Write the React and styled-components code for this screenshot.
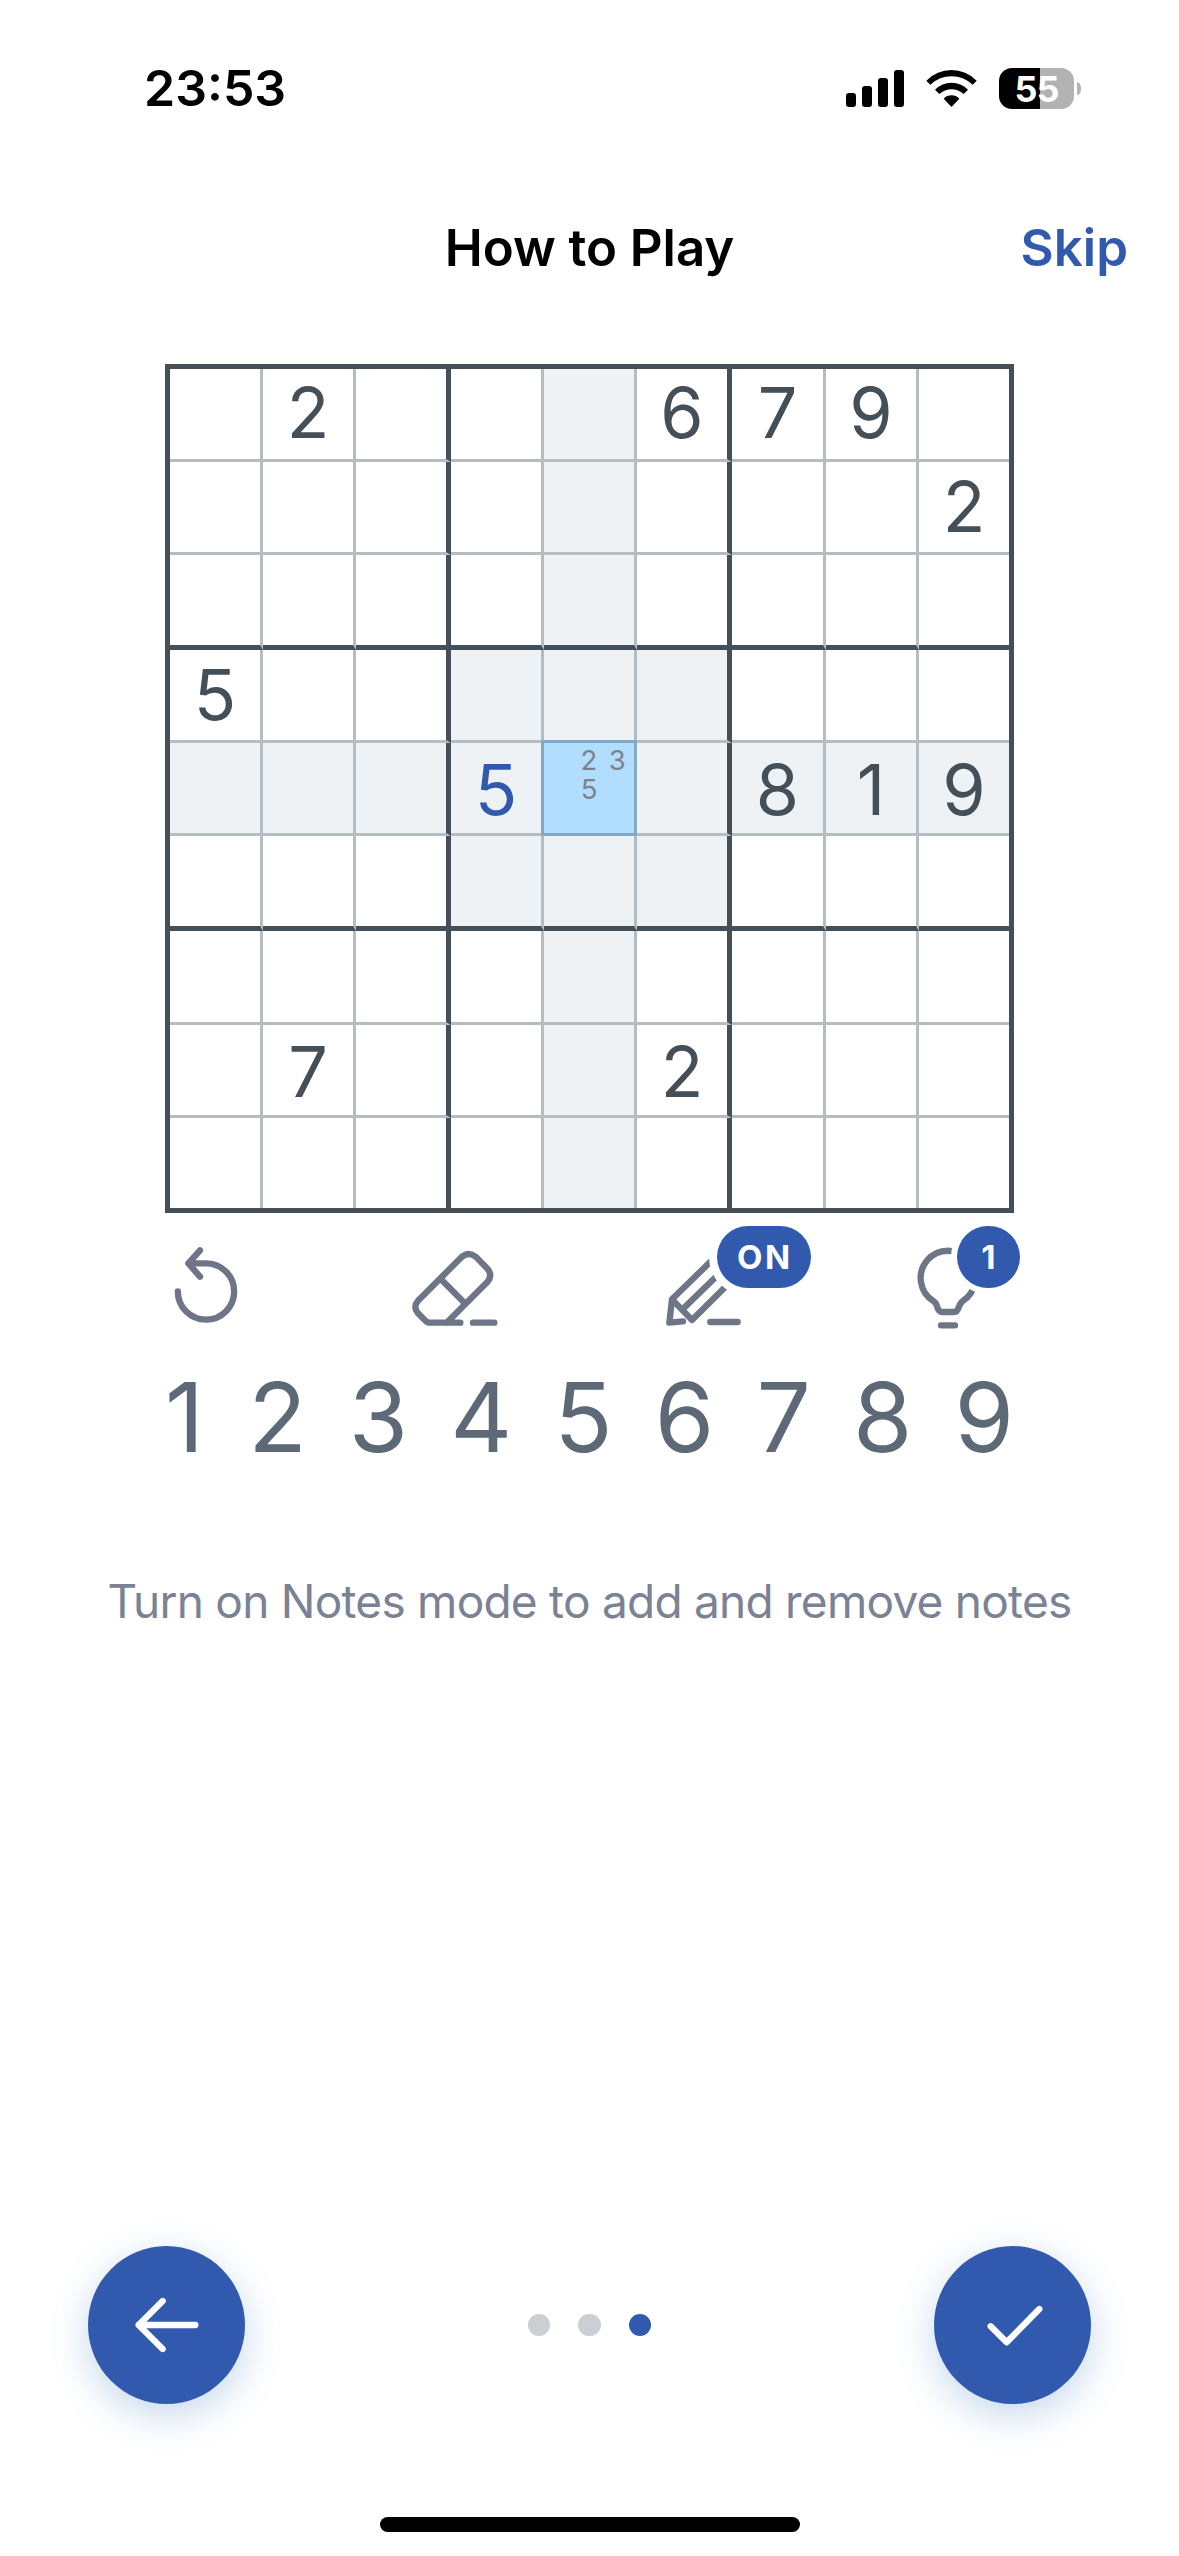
import React from "react";
import styled, { createGlobalStyle } from "styled-components";

const blue = "#315AAF";
const ink = "#444F58";
const toolColor = "#6D7587";

const GlobalStyle = createGlobalStyle`
  * { box-sizing: border-box; }
  body { margin: 0; background: #fff; }
  button { border: 0; padding: 0; background: none; font: inherit; color: inherit; }
`;

const Screen = styled.main`
  width: 1179px;
  height: 2556px;
  display: flex;
  flex-direction: column;
  overflow: hidden;
  background: #fff;
  font-family: Inter, "Liberation Sans", sans-serif;
`;

const StatusBar = styled.div`
  height: 176px;
  padding: 0 98px 0 144px;
  display: flex;
  align-items: center;
  justify-content: space-between;
`;

const Clock = styled.div`
  font-size: 50px;
  font-weight: 600;
  line-height: 60px;
`;

const StatusIcons = styled.div`
  display: flex;
  align-items: center;
  gap: 22px;
`;

const Battery = styled.div`
  display: flex;
  align-items: center;
  gap: 3px;
`;

const BatteryBody = styled.div`
  width: 75px;
  height: 41px;
  border-radius: 13px;
  background: linear-gradient(90deg, #000 0 41px, #b2b2b2 41px);
  color: #fff;
  font-size: 36px;
  font-weight: 700;
  line-height: 42px;
  letter-spacing: -1px;
  text-align: center;
`;

const BatteryCap = styled.div`
  width: 4px;
  height: 13px;
  border-radius: 0 4px 4px 0 / 0 6px 6px 0;
  background: #b2b2b2;
`;

const Header = styled.header`
  height: 144px;
  padding: 0 51px;
  display: grid;
  grid-template-columns: 1fr auto 1fr;
  align-items: center;
`;

const Title = styled.h1`
  grid-column: 2;
  margin: 0;
  font-size: 51px;
  font-weight: 600;
  line-height: 62px;
  letter-spacing: -0.05px;
`;

const SkipButton = styled.button`
  justify-self: end;
  color: ${blue};
  font-size: 51px;
  font-weight: 600;
  line-height: 62px;
`;

const Board = styled.section`
  margin: 44px 0 0 165px;
  width: 849px;
  height: 849px;
  flex: none;
  border: 5px solid ${ink};
  display: grid;
  grid-template-columns: 93px 93px 95px 93px 93px 95px 94px 93px 90px;
  grid-template-rows: 93px 93px 95px 93px 93px 95px 94px 93px 90px;
`;

const edge = (i) =>
  i === 8 ? "0" : i % 3 === 2 ? `5px solid ${ink}` : "3px solid #B5BCC2";

const nudge = (row) => (row === 0 ? "0 0 2px" : row % 3 === 1 && row > 1 ? "4px 0 0" : "0");

const Cell = styled.div`
  display: flex;
  align-items: center;
  justify-content: center;
  padding: ${(p) => nudge(p.$row)};
  border-right: ${(p) => edge(p.$col)};
  border-bottom: ${(p) => edge(p.$row)};
  background: ${(p) => (p.$shaded ? "#EEF2F5" : "#fff")};
  color: ${(p) => (p.$entered ? blue : ink)};
  font-size: 70px;
  font-weight: 380;
  line-height: 84px;
`;

const SelectedCell = styled(Cell)`
  position: relative;
  padding: 2px 0 0;
  border-color: #82AAC7;
  background: #B1DEFF;
  box-shadow: -3px 0 #82AAC7, 0 -3px #82AAC7, -3px -3px #82AAC7;
`;

const Notes = styled.div`
  display: grid;
  grid-template: repeat(3, 29px) / repeat(3, 28.3px);
  color: #7D8289;
  font-size: 27.5px;
  font-weight: 400;
  line-height: 28px;
  text-align: center;
`;

const Toolbar = styled.div`
  margin: 13px 0 0 165px;
  width: 855px;
  height: 110px;
  display: grid;
  grid-template-columns: 239.7px 255.6px 249.7px 110px;
  justify-items: start;
`;

const Tool = styled.button`
  position: relative;
  width: ${(p) => p.$width}px;
  height: 110px;
  display: flex;
`;

const Badge = styled.span`
  position: absolute;
  top: 0;
  right: 0;
  width: ${(p) => p.$width}px;
  height: 62px;
  border-radius: 31px;
  background: ${blue};
  box-shadow: 0 0 0 ${(p) => p.$ring}px #fff;
  color: #fff;
  font-size: 33px;
  font-weight: 700;
  line-height: 62px;
  letter-spacing: ${(p) => p.$spacing}px;
  text-indent: ${(p) => p.$spacing / 2}px;
  text-align: center;
`;

const NumberPad = styled.div`
  margin: 23px 0 0 163px;
  width: 851px;
  height: 116px;
  display: flex;
  justify-content: space-between;
  color: #5E6978;
  font-size: 96px;
  line-height: 116px;
`;

const PadDigit = styled.span`
  padding: ${(p) => (p.$narrow ? "0 2px" : "0")};
`;

const Hint = styled.p`
  margin: 98px 0 0;
  text-align: center;
  white-space: nowrap;
  color: #7B8295;
  font-size: 46px;
  line-height: 56px;
  letter-spacing: -0.76px;
`;

const Footer = styled.footer`
  margin-top: auto;
  padding: 0 88px;
  display: flex;
  align-items: center;
  justify-content: space-between;
`;

const RoundButton = styled.button`
  width: 157px;
  height: 158px;
  border-radius: 50%;
  background: ${blue};
  box-shadow: 0 11px 38px rgba(60, 120, 190, 0.29);
  display: flex;
  align-items: center;
  justify-content: center;
`;

const Dots = styled.div`
  display: flex;
  gap: 28px;
`;

const Dot = styled.span`
  width: 22.5px;
  height: 22.5px;
  border-radius: 50%;
  background: ${(p) => (p.$active ? blue : "#CBCFD4")};
`;

const HomeIndicator = styled.div`
  flex: none;
  align-self: center;
  margin: 113px 0 24px;
  width: 420px;
  height: 15px;
  border-radius: 8px;
  background: #000;
`;

const Line = styled.svg`
  display: block;
  fill: none;
  stroke: ${(p) => p.$color};
  stroke-width: 19px;
  stroke-linecap: round;
  stroke-linejoin: round;
`;

const GIVENS = {
  "0-1": 2, "0-5": 6, "0-6": 7, "0-7": 9, "1-8": 2, "3-0": 5,
  "4-3": 5, "4-6": 8, "4-7": 1, "4-8": 9, "7-1": 7, "7-5": 2,
};
const SELECTED = { row: 4, col: 4 };
const NOTES = [2, 3, 5];
const NINE = [1, 2, 3, 4, 5, 6, 7, 8, 9];

const isShaded = (r, c) =>
  r === SELECTED.row ||
  c === SELECTED.col ||
  (Math.floor(r / 3) === 1 && Math.floor(c / 3) === 1);

function SudokuBoard() {
  const cells = [];
  for (let r = 0; r < 9; r++) {
    for (let c = 0; c < 9; c++) {
      const key = `${r}-${c}`;
      if (r === SELECTED.row && c === SELECTED.col) {
        cells.push(
          <SelectedCell key={key} $row={r} $col={c}>
            <Notes>
              {NINE.map((n) => (
                <span key={n}>{NOTES.includes(n) ? n : ""}</span>
              ))}
            </Notes>
          </SelectedCell>
        );
      } else {
        cells.push(
          <Cell key={key} $row={r} $col={c} $shaded={isShaded(r, c)} $entered={key === "4-3"}>
            {GIVENS[key]}
          </Cell>
        );
      }
    }
  }
  return <Board>{cells}</Board>;
}

const Signal = () => (
  <svg width="58" height="37" viewBox="0 0 58 37">
    <rect x="0" y="23" width="10" height="14" rx="3" />
    <rect x="16" y="16" width="10" height="21" rx="3" />
    <rect x="32" y="8" width="10" height="29" rx="3" />
    <rect x="48" y="0" width="10" height="37" rx="3" />
  </svg>
);

const Wifi = () => (
  <svg width="51" height="37" viewBox="319 87 151 111">
    <path d="M319 119 Q351 87 394.5 87 Q438 87 470 119 L458 131 Q430 106 394.5 106 Q359 106 331 131 Z" />
    <path d="M345 146 Q366 125 394.5 125 Q423 125 444 146 L431 159 Q415 145 394.5 145 Q374 145 358 159 Z" />
    <path d="M371 173 Q381 163 394.5 163 Q408 163 418 173 L394.5 198 Z" />
  </svg>
);

export default function App() {
  return (
    <>
      <GlobalStyle />
      <Screen>
        <StatusBar>
          <Clock>23:53</Clock>
          <StatusIcons>
            <Signal />
            <Wifi />
            <Battery>
              <BatteryBody>55</BatteryBody>
              <BatteryCap />
            </Battery>
          </StatusIcons>
        </StatusBar>
        <Header>
          <Title>How to Play</Title>
          <SkipButton>Skip</SkipButton>
        </Header>
        <SudokuBoard />
        <Toolbar>
          <Tool $width={80} aria-label="Undo">
            <Line $color={toolColor} width="80" height="110" viewBox="45 108 240 330">
              <path d="M83.5 304 A84.5 84.5 0 1 0 168 220 H116 M150 181 L115 220 L150 260" />
            </Line>
          </Tool>
          <Tool $width={100} aria-label="Erase">
            <Line $color={toolColor} width="100" height="110" viewBox="764 108 300 330">
              <path d="M930 398 H836 Q831 398 827 394 L803 370 Q787 351 803 332 L934 201 Q955 183 976 200 L1011 236 Q1028 255 1011 276 L889 398 M872 268 L942 338 M968 398 H1032" />
            </Line>
          </Tool>
          <Tool $width={151} aria-label="Notes">
            <Line $color={toolColor} width="151" height="110" viewBox="61 108 453 330">
              <path d="M240 188 L97 328 L89 398 L130 394 M97 328 L157 390 L275 273 M250 240 L132 355 M212 396 H294" />
            </Line>
            <Badge $width={94} $ring={8} $spacing={2.5}>ON</Badge>
          </Tool>
          <Tool $width={110} aria-label="Hint">
            <Line $color={toolColor} width="110" height="110" viewBox="810 108 330 330">
              <path d="M907 366 Q896 366 892 352 Q890 340 881 334 A82 82 0 1 1 967 334 Q959 341 956 352 Q952 366 942 366 Z M903 406 H945" />
            </Line>
            <Badge $width={63} $ring={6} $spacing={0}>1</Badge>
          </Tool>
        </Toolbar>
        <NumberPad>
          {NINE.map((n) => (
            <PadDigit key={n} $narrow={n === 1}>{n}</PadDigit>
          ))}
        </NumberPad>
        <Hint>Turn on Notes mode to add and remove notes</Hint>
        <Footer>
          <RoundButton aria-label="Back">
            <Line $color="#fff" width="80" height="80" viewBox="230 225 240 240">
              <path d="M265 345 H435 M337 273 L265 345 L337 417" />
            </Line>
          </RoundButton>
          <Dots>
            <Dot />
            <Dot />
            <Dot $active />
          </Dots>
          <RoundButton aria-label="Done">
            <Line $color="#fff" width="80" height="80" viewBox="218 225 240 240">
              <path d="M271 349 L319 397 L417 297" />
            </Line>
          </RoundButton>
        </Footer>
        <HomeIndicator />
      </Screen>
    </>
  );
}
